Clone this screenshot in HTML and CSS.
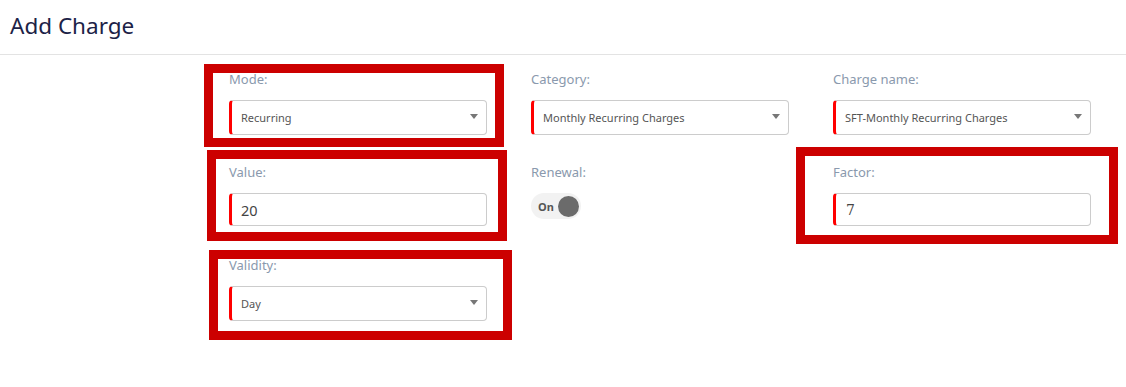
FILE: index.html
```html
<!DOCTYPE html>
<html lang="en">
<head>
    <meta charset="UTF-8">
    <title>Add Charge</title>
    <link rel="stylesheet" href="styles.css">
</head>
<body>
    <div class="page">
        <header class="page-header">
            <h1>Add Charge</h1>
        </header>

        <form class="charge-form">
            <div class="field">
                <label>Mode:</label>
                <div class="select"><span>Recurring</span></div>
            </div>
            <div class="field">
                <label>Category:</label>
                <div class="select"><span>Monthly Recurring Charges</span></div>
            </div>
            <div class="field">
                <label>Charge name:</label>
                <div class="select"><span>SFT-Monthly Recurring Charges</span></div>
            </div>

            <div class="field">
                <label for="valor">Value:</label>
                <input type="text" id="valor" class="text-input" value="20">
            </div>
            <div class="field">
                <label>Renewal:</label>
                <div class="toggle">
                    <span class="toggle-label">On</span>
                    <span class="toggle-knob"></span>
                </div>
            </div>
            <div class="field">
                <label for="factor">Factor:</label>
                <input type="text" id="factor" class="text-input serif" value="7">
            </div>

            <div class="field">
                <label>Validity:</label>
                <div class="select"><span>Day</span></div>
            </div>
        </form>

        <!-- marcações de revisão desenhadas por cima -->
        <div class="mark mark-mode"></div>
        <div class="mark mark-value"></div>
        <div class="mark mark-factor"></div>
        <div class="mark mark-validity"></div>
    </div>
</body>
</html>
```

FILE: styles.css
```css
body {
    font-family: "Noto Sans", "Open Sans", Arial, sans-serif;
    background-color: #fff;
    margin: 0;
    padding: 0;
}

.page {
    position: relative;
    width: 1126px;
    height: 387px;
    overflow: hidden;
}

.page-header {
    height: 54px;
    border-bottom: 1px solid #e3e3e3;
    padding: 0 10px;
    display: flex;
    align-items: center;
}

.page-header h1 {
    margin: 0;
    font-size: 22.5px;
    font-weight: 400;
    color: #1c2247;
    padding-bottom: 4px;
}

.charge-form {
    display: grid;
    grid-template-columns: repeat(3, 258px);
    column-gap: 44px;
    row-gap: 27px;
    padding: 14px 0 0 229px;
}

.field {
    min-height: 66px;
}

.field label {
    display: block;
    height: 20px;
    line-height: 20px;
    margin-bottom: 11px;
    font-size: 13px;
    color: #8a99ad;
}

.select,
.text-input {
    box-sizing: border-box;
    width: 258px;
    border: 1px solid #cccccc;
    border-left: 3px solid #ff0000;
    border-radius: 4px;
    background-color: #fff;
}

.select {
    position: relative;
    height: 35px;
    padding-left: 9px;
    display: flex;
    align-items: center;
    font-size: 11px;
    color: #555;
}

.select::after {
    content: "";
    position: absolute;
    right: 8px;
    top: 13px;
    border-left: 4px solid transparent;
    border-right: 4px solid transparent;
    border-top: 5px solid #777;
}

.text-input {
    display: block;
    height: 33px;
    padding: 0 0 0 9px;
    margin: 0;
    font-family: inherit;
    font-size: 14.5px;
    color: #444;
    outline: none;
}

.text-input.serif {
    font-family: "DejaVu Serif", "Liberation Serif", serif;
    font-size: 14px;
    padding-left: 10px;
}

.toggle {
    display: flex;
    align-items: center;
    width: 50px;
    height: 26px;
    margin-top: 2px;
    box-sizing: border-box;
    padding: 0 2px 0 7px;
    border-radius: 13px;
    background-color: #f2f2f2;
}

.toggle-label {
    font-size: 11px;
    font-weight: 700;
    color: #555;
    flex: 1;
}

.toggle-knob {
    width: 21px;
    height: 21px;
    border-radius: 50%;
    background-color: #6b6b6b;
}

.mark {
    position: absolute;
    box-sizing: border-box;
    border: 9px solid #cc0000;
}

.mark-mode {
    left: 204px;
    top: 64px;
    width: 300px;
    height: 83px;
}

.mark-value {
    left: 207px;
    top: 150px;
    width: 300px;
    height: 91px;
}

.mark-factor {
    left: 796px;
    top: 147px;
    width: 322px;
    height: 97px;
}

.mark-validity {
    left: 209px;
    top: 250px;
    width: 303px;
    height: 90px;
}
```
